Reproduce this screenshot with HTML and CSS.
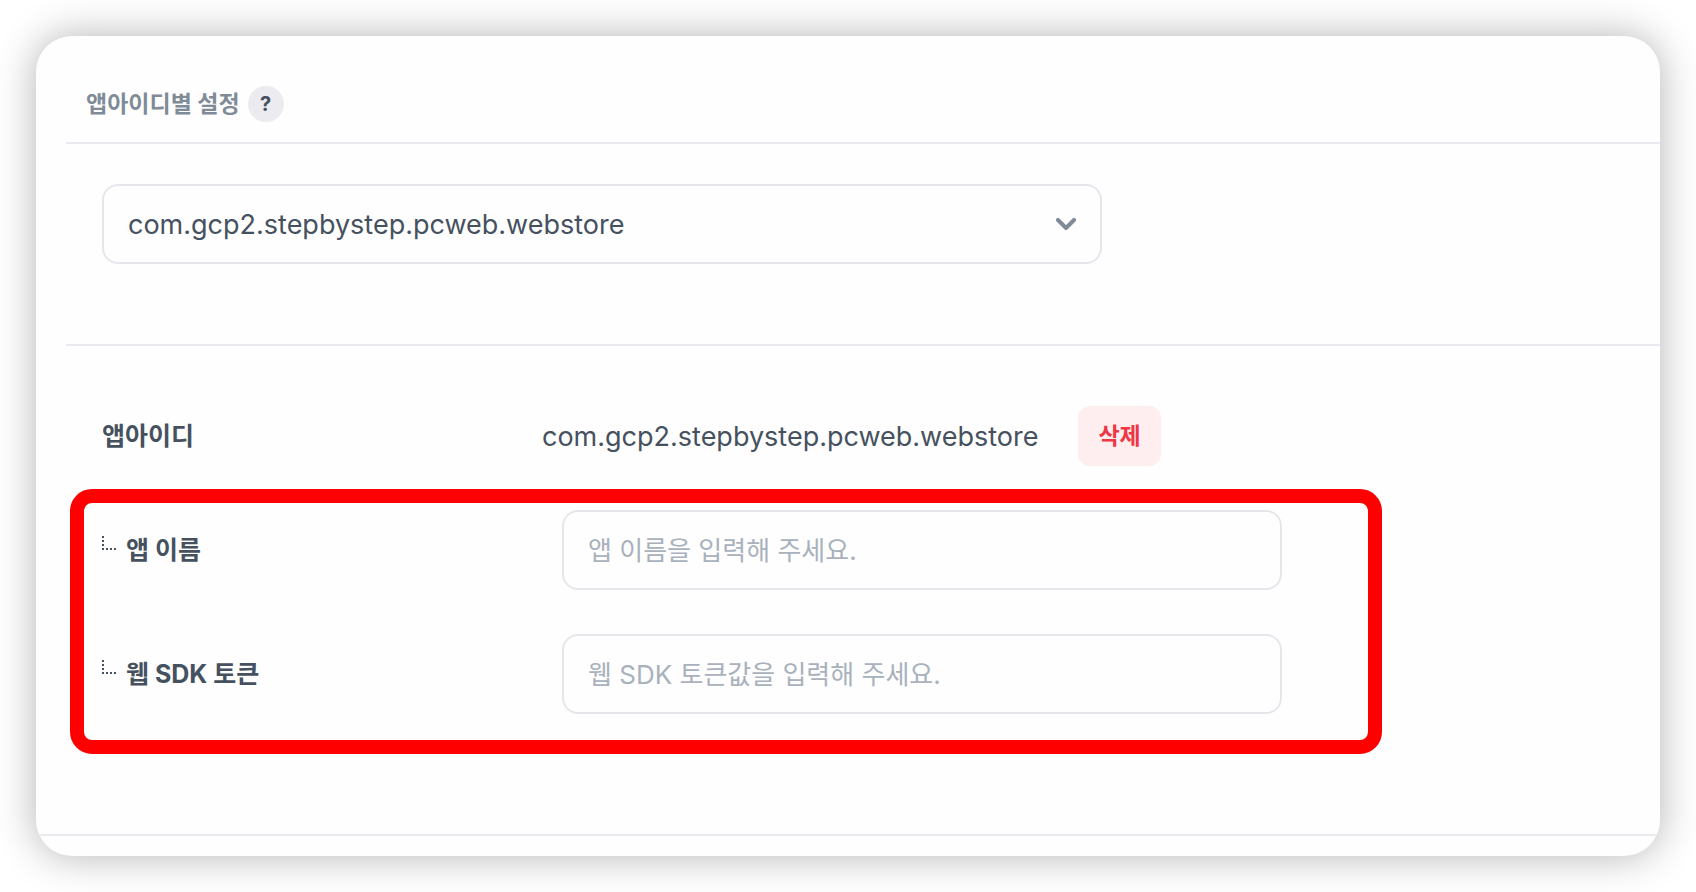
FILE: index.html
```html
<!DOCTYPE html>
<html lang="ko">

<head>
    <meta charset="UTF-8">
    <meta name="viewport" content="width=device-width, initial-scale=1.0">
    <title>앱아이디별 설정</title>
    <link rel="stylesheet" href="styles.css">
</head>

<body>
    <main class="card">
        <header class="card-header">
            <h1 class="card-title">앱아이디별 설정</h1>
            <button class="help" type="button">?</button>
        </header>

        <!-- App id selector -->
        <section class="picker">
            <div class="select-box">
                <select class="select" aria-label="앱아이디 선택">
                    <option>com.gcp2.stepbystep.pcweb.webstore</option>
                </select>
                <svg class="chevron" viewBox="0 0 20 12" width="20" height="12">
                    <path d="M2 2 L10 10 L18 2" />
                </svg>
            </div>
        </section>

        <!-- Settings of the selected app id -->
        <section class="settings">
            <div class="row">
                <span class="label">앱아이디</span>
                <span class="app-id">com.gcp2.stepbystep.pcweb.webstore</span>
                <button class="delete" type="button">삭제</button>
            </div>

            <div class="highlight">
                <div class="field">
                    <label class="label" for="app-name">
                        <svg class="branch" viewBox="0 0 14 14" width="14" height="14">
                            <path d="M1 0 V14 M4 13 H14" />
                        </svg>
                        앱 이름
                    </label>
                    <input class="input" id="app-name" type="text" placeholder="앱 이름을 입력해 주세요.">
                </div>
                <div class="field">
                    <label class="label" for="sdk-token">
                        <svg class="branch" viewBox="0 0 14 14" width="14" height="14">
                            <path d="M1 0 V14 M4 13 H14" />
                        </svg>
                        웹 SDK 토큰
                    </label>
                    <input class="input" id="sdk-token" type="text" placeholder="웹 SDK 토큰값을 입력해 주세요.">
                </div>
            </div>
        </section>
    </main>
</body>

</html>
```

FILE: styles.css
```css
* {
    box-sizing: border-box;
}

body {
    margin: 0;
    padding: 36px;
    background-color: #fff;
    color: #465160;
    font-family: Inter, "Noto Sans CJK KR", sans-serif;
    font-size: 27px;
}

button,
input,
select {
    font-family: inherit;
    color: inherit;
}

.card {
    padding-bottom: 20px;
    border-radius: 36px;
    background-color: #fefefe;
    box-shadow: 0 0 40px rgba(0, 0, 0, 0.3);
    overflow: hidden;
}

.card-header {
    display: flex;
    align-items: center;
    gap: 8px;
    margin-left: 30px;
    padding: 50px 20px 20px;
    border-bottom: 2px solid #e9e9ef;
}

.card-title {
    margin: 0;
    color: #808b98;
    font-size: 23px;
    font-weight: 700;
    line-height: 36px;
}

.help {
    width: 36px;
    height: 36px;
    padding: 0;
    border: 0;
    border-radius: 50%;
    background-color: #ebebf0;
    font-size: 20px;
    font-weight: 700;
}

/* Selector */
.picker {
    margin-left: 30px;
    padding: 40px 36px 80px;
    border-bottom: 2px solid #e9e9ef;
}

.select-box {
    position: relative;
    max-width: 1000px;
}

.select {
    display: block;
    width: 100%;
    height: 80px;
    padding: 0 64px 0 24px;
    border: 2px solid #e6e6ec;
    border-radius: 16px;
    background-color: transparent;
    font-size: 27px;
    appearance: none;
}

.chevron {
    position: absolute;
    top: 34px;
    right: 26px;
    fill: none;
    stroke: #808b98;
    stroke-width: 4;
    stroke-linecap: round;
    stroke-linejoin: round;
    pointer-events: none;
}

/* Settings */
.settings {
    padding: 60px 34px 80px;
    border-bottom: 2px solid #e9e9ef;
}

.row {
    display: flex;
    align-items: center;
    padding-left: 32px;
}

.label {
    display: flex;
    flex: none;
    align-items: center;
    gap: 10px;
    width: 440px;
    font-size: 25px;
    font-weight: 700;
    line-height: 28px;
}

.app-id {
    font-size: 27px;
}

.delete {
    height: 60px;
    margin-left: 40px;
    padding: 0 20px 4px;
    border: 0;
    border-radius: 12px;
    background-color: #ffeef0;
    color: #ee3645;
    font-size: 23px;
    font-weight: 700;
}

.highlight {
    display: grid;
    gap: 44px;
    max-width: 1312px;
    margin-top: 23px;
    padding: 7px 18px 26px;
    border: 14px solid #f00;
    border-radius: 22px;
}

.field {
    display: flex;
    align-items: center;
    gap: 20px;
}

.branch {
    align-self: flex-start;
    fill: none;
    stroke: #465160;
    stroke-width: 2;
    stroke-dasharray: 2;
}

.input {
    width: 720px;
    height: 80px;
    padding: 0 24px;
    border: 2px solid #e6e6ec;
    border-radius: 16px;
    background-color: transparent;
    font-size: 26px;
}

.input::placeholder {
    color: #a8b1bc;
}
```
